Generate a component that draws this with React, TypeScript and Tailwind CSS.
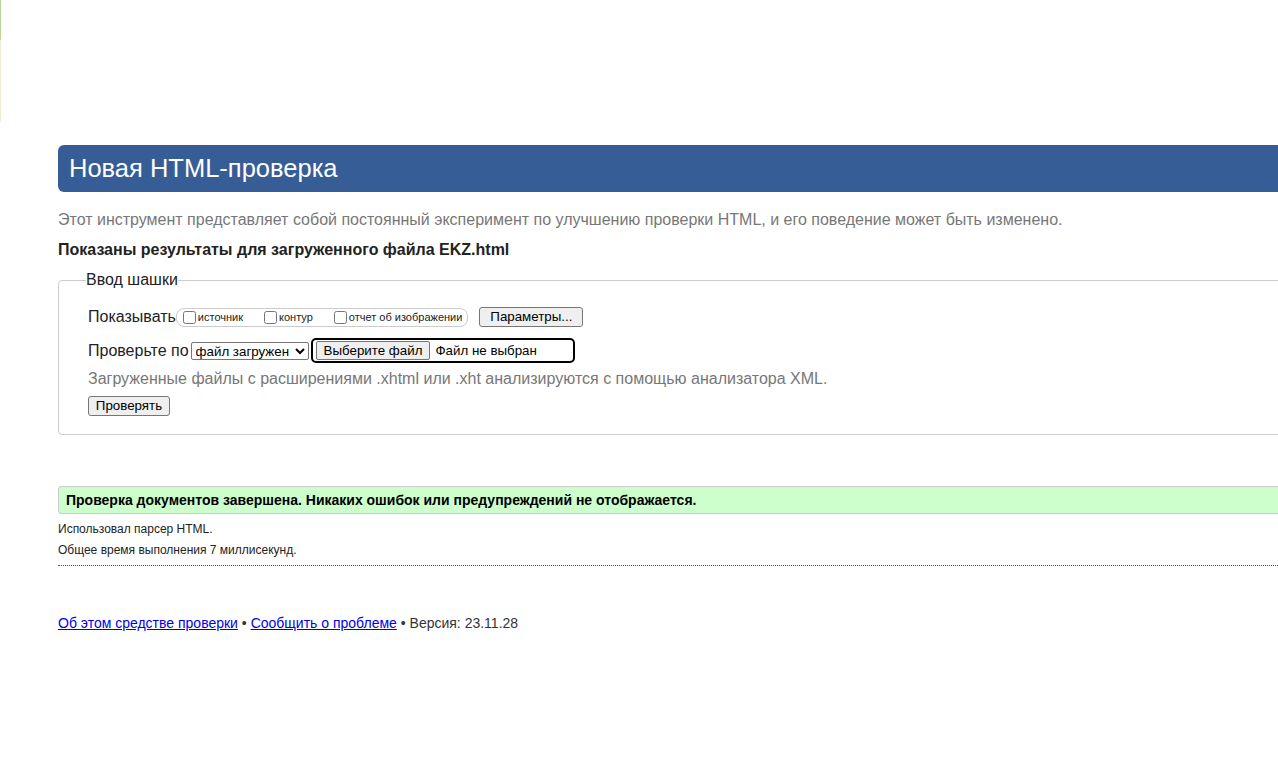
import React from "react";

export default function App() {
  return (
    <div
      className="flex h-[766px] w-[1278px] overflow-hidden bg-white text-[#222]"
      style={{ fontFamily: '"Liberation Sans", Arial, sans-serif' }}
    >
      <div className="flex w-px shrink-0 flex-col">
        <div className="h-[40px] bg-[#b8d99c]" />
        <div className="h-[82px] bg-[#f3ecd0]" />
      </div>
      <main className="ml-[57px] w-[1300px] shrink-0 pt-[145px]">
        <h1 className="flex h-[47px] items-center rounded-l-[6px] bg-[#365d95] pl-[11px] text-[25.5px] font-normal text-white">
          Новая HTML-проверка
        </h1>
        <p className="mt-[18px] text-[16px] leading-[20px] text-[#777]">
          Этот инструмент представляет собой постоянный эксперимент по улучшению проверки HTML, и его поведение может быть изменено.
        </p>
        <p className="mt-[11px] text-[16px] font-bold leading-[18px] text-[#222]">
          Показаны результаты для загруженного файла EKZ.html
        </p>

        <fieldset className="mt-[12px] rounded-[4px] border border-[#ccc] pb-[17px] pl-[29px]">
          <legend className="-ml-[2px] text-[16px] leading-[18px] text-[#222]">Ввод шашки</legend>

          <div className="mt-[18px] flex h-[20px] items-center">
            <span className="text-[16px] leading-[18px] text-[#222]">Показывать</span>
            <span className="flex h-[19px] items-center rounded-[8px] border border-[#ccc] pl-[6px] pr-[5px] text-[11px]">
              <label className="flex items-center">
                <input type="checkbox" className="m-0 mr-[2px] h-[13px] w-[13px]" />
                источник
              </label>
              <label className="ml-[21px] flex items-center">
                <input type="checkbox" className="m-0 mr-[2px] h-[13px] w-[13px]" />
                контур
              </label>
              <label className="ml-[21px] flex items-center">
                <input type="checkbox" className="m-0 mr-[2px] h-[13px] w-[13px]" />
                отчет об изображении
              </label>
            </span>
            <button className="ml-[11px] h-[20px] w-[104px] rounded-[3px] border border-[#767676] bg-[#efefef] text-[13.33px] leading-[16px] text-black">
              Параметры...
            </button>
          </div>

          <div className="mt-[11px] flex h-[25px] items-center">
            <span className="text-[16px] leading-[18px] text-[#222]">Проверьте по</span>
            <select className="ml-[2px] h-[18px] w-[118px] rounded-[2px] border border-[#767676] text-[13.33px] leading-[16px] text-black">
              <option>файл загружен</option>
            </select>
            <span className="ml-[2px] flex h-[25px] w-[264px] items-center rounded-[5px] border-2 border-black pl-[3px] text-[13.33px] text-black">
              <span className="flex h-[19px] items-center rounded-[2px] border border-[#767676] bg-[#efefef] px-[7px] leading-[16px]">
                Выберите файл
              </span>
              <span className="ml-[5px]">Файл не выбран</span>
            </span>
          </div>

          <div className="mt-[6px] flex h-[20px] items-center text-[16px] text-[#777]">
            Загруженные файлы с расширениями .xhtml или .xht анализируются с помощью анализатора XML.
          </div>

          <button className="mt-[7px] h-[20px] w-[82px] rounded-[3px] border border-[#767676] bg-[#efefef] text-[13.33px] leading-[16px] text-black">
            Проверять
          </button>
        </fieldset>

        <div className="mt-[51px] flex h-[28px] items-center rounded-l-[4px] border border-r-0 border-[#ccc] bg-[#ccffcc] pl-[7px] text-[14px] font-bold text-black">
          Проверка документов завершена. Никаких ошибок или предупреждений не отображается.
        </div>

        <p className="mt-[5px] text-[12px] leading-[21px] text-[#222]">Использовал парсер HTML.</p>
        <p className="text-[12px] leading-[21px] text-[#222]">Общее время выполнения 7 миллисекунд.</p>
        <div className="mt-[4px] border-t border-dotted border-[#555]" />

        <p className="mt-[48px] text-[14px] leading-[18px] text-[#333]">
          <a href="#" className="text-[#0000ee] underline">Об этом средстве проверки</a>
          {" • "}
          <a href="#" className="text-[#0000ee] underline">Сообщить о проблеме</a>
          {" • Версия: 23.11.28"}
        </p>
      </main>
    </div>
  );
}
